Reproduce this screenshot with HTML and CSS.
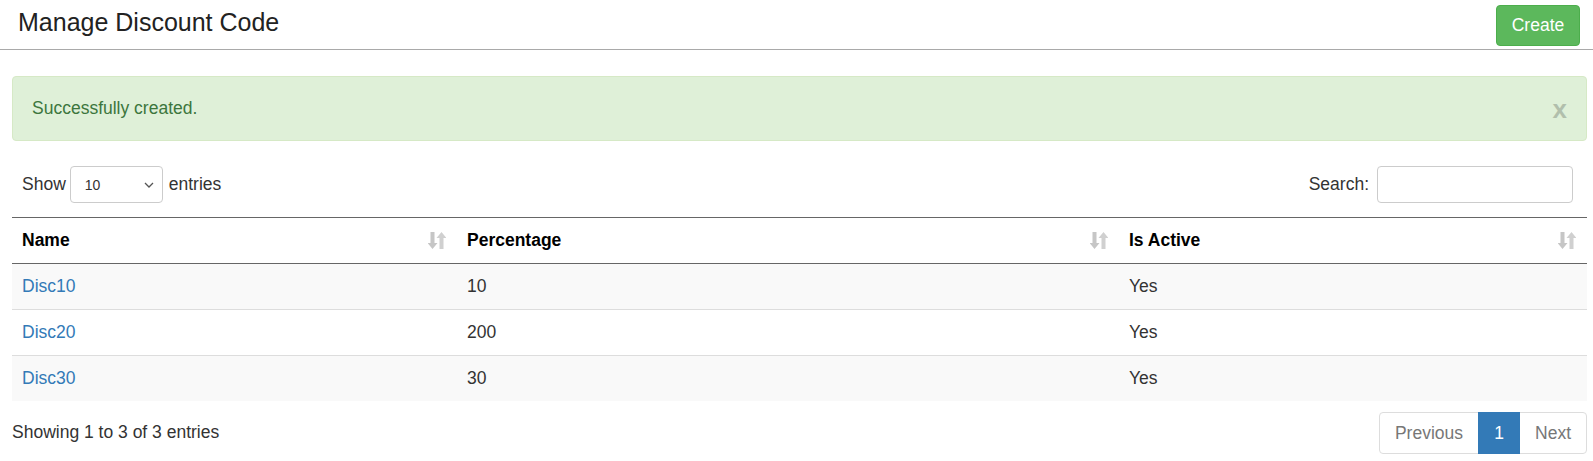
FILE: index.html
```html
<!DOCTYPE html>
<html>
<head>
<meta charset="utf-8">
<title>Manage Discount Code</title>
<link rel="stylesheet" href="styles.css">
</head>
<body>
<header class="page-header">
  <h1 class="page-title">Manage Discount Code</h1>
  <button class="btn-create">Create</button>
</header>
<main class="content">
  <div class="alert">
    <span class="alert-text">Successfully created.</span>
    <span class="alert-close">x</span>
  </div>
  <div class="controls">
    <label class="length">Show
      <select class="length-select"><option>10</option></select>
      entries</label>
    <label class="search">Search: <input class="search-input" type="text"></label>
  </div>
  <table class="grid">
    <colgroup>
      <col class="c1"><col class="c2"><col class="c3">
    </colgroup>
    <thead>
      <tr>
        <th><div class="th-in"><span>Name</span><svg class="sort" viewBox="0 0 18 17"><path d="M2.5 0h4v11h3L4.5 17l-5-6h3z" fill="#c6c6c6"/><path d="M15.5 17h-4V6h-3l5-6 5 6h-3z" fill="#d0d0d0"/></svg></div></th>
        <th><div class="th-in"><span>Percentage</span><svg class="sort" viewBox="0 0 18 17"><path d="M2.5 0h4v11h3L4.5 17l-5-6h3z" fill="#c6c6c6"/><path d="M15.5 17h-4V6h-3l5-6 5 6h-3z" fill="#d0d0d0"/></svg></div></th>
        <th><div class="th-in"><span>Is Active</span><svg class="sort" viewBox="0 0 18 17"><path d="M2.5 0h4v11h3L4.5 17l-5-6h3z" fill="#c6c6c6"/><path d="M15.5 17h-4V6h-3l5-6 5 6h-3z" fill="#d0d0d0"/></svg></div></th>
      </tr>
    </thead>
    <tbody>
      <tr class="odd"><td><a href="#">Disc10</a></td><td>10</td><td>Yes</td></tr>
      <tr><td><a href="#">Disc20</a></td><td>200</td><td>Yes</td></tr>
      <tr class="odd"><td><a href="#">Disc30</a></td><td>30</td><td>Yes</td></tr>
    </tbody>
  </table>
  <div class="footer">
    <div class="info">Showing 1 to 3 of 3 entries</div>
    <ul class="pager">
      <li class="pg disabled">Previous</li>
      <li class="pg active">1</li>
      <li class="pg disabled">Next</li>
    </ul>
  </div>
</main>
</body>
</html>
```
FILE: styles.css
```css
* { box-sizing: border-box; }
html, body { margin: 0; padding: 0; }
body {
  font-family: "Liberation Sans", Arial, sans-serif;
  font-size: 17.5px;
  line-height: 25px;
  color: #333;
  background: #fff;
}
.page-header {
  display: flex;
  align-items: center;
  justify-content: space-between;
  height: 50px;
  padding: 0 13px 0 18px;
  border-bottom: 1px solid #a9a9a9;
}
.page-title {
  margin: 0 0 5px 0;
  font-size: 25px;
  font-weight: normal;
  line-height: 28px;
  color: #222;
}
.btn-create {
  height: 41px;
  width: 84px;
  margin-top: 1px;
  padding: 0;
  font-family: inherit;
  font-size: 17.5px;
  color: #fff;
  background: #5cb85c;
  border: 1px solid #4cae4c;
  border-radius: 4px;
}
.content {
  padding: 26px 6px 0 12px;
}
.alert {
  display: flex;
  align-items: center;
  justify-content: space-between;
  height: 65px;
  padding: 0 19px 0 19px;
  background: #dff0d8;
  border: 1px solid #d6e9c6;
  border-radius: 4px;
  color: #3c763d;
}
.alert-text { margin-top: -1px; }
.alert-close {
  font-size: 26px;
  font-weight: bold;
  line-height: 26px;
  color: #000;
  opacity: 0.2;
  margin-top: 1px;
}
.controls {
  display: flex;
  align-items: center;
  justify-content: space-between;
  margin-top: 25px;
  height: 37px;
  padding: 0 14px 0 10px;
}
.length, .search {
  display: flex;
  align-items: center;
  gap: 4px;
}
.length-select { margin-right: 2px; }
.search { gap: 8px; }
.length-select {
  appearance: none;
  -webkit-appearance: none;
  width: 93px;
  height: 37px;
  padding: 0 0 0 14px;
  font-family: inherit;
  font-size: 14px;
  color: #333;
  border: 1px solid #ccc;
  border-radius: 4px;
  background: #fff url("data:image/svg+xml;utf8,<svg xmlns='http://www.w3.org/2000/svg' width='10' height='6' viewBox='0 0 10 6'><path d='M1 1l4 4 4-4' fill='none' stroke='%23555' stroke-width='1.3'/></svg>") no-repeat right 8px center;
}
.search-input {
  width: 196px;
  height: 37px;
  border: 1px solid #ccc;
  border-radius: 4px;
  font-family: inherit;
  font-size: 17.5px;
}
.grid {
  width: 1575px;
  margin-top: 14px;
  border-collapse: collapse;
  border-top: 1px solid #666;
}
.c1 { width: 445px; }
.c2 { width: 662px; }
.c3 { width: 468px; }
.grid th {
  text-align: left;
  font-weight: bold;
  color: #000;
  padding: 10px 10px 10px 10px;
  border-bottom: 1px solid #666;
}
.th-in {
  display: flex;
  align-items: center;
  justify-content: space-between;
}
.sort {
  width: 18px;
  height: 17px;
  margin-right: 1px;
}
.grid td {
  padding: 10px 10px;
  border-top: 1px solid #ddd;
}
.grid tbody tr:first-child td { border-top: none; }
.grid tr.odd td { background: #f9f9f9; }
.grid a {
  color: #337ab7;
  text-decoration: none;
}
.footer {
  display: flex;
  align-items: center;
  justify-content: space-between;
  margin-top: 11px;
  width: 1575px;
}
.info { margin-top: -2px; }
.pager {
  display: flex;
  list-style: none;
  margin: 0;
  padding: 0;
}
.pg {
  height: 42px;
  line-height: 40px;
  padding: 0 15px;
  border: 1px solid #ddd;
  margin-left: -1px;
  color: #777;
  background: #fff;
}
.pg:first-child { border-radius: 4px 0 0 4px; }
.pg:last-child { border-radius: 0 4px 4px 0; }
.pg.active {
  color: #fff;
  background: #337ab7;
  border-color: #337ab7;
  width: 42px;
  padding: 0;
  text-align: center;
  position: relative;
  z-index: 1;
}
```
